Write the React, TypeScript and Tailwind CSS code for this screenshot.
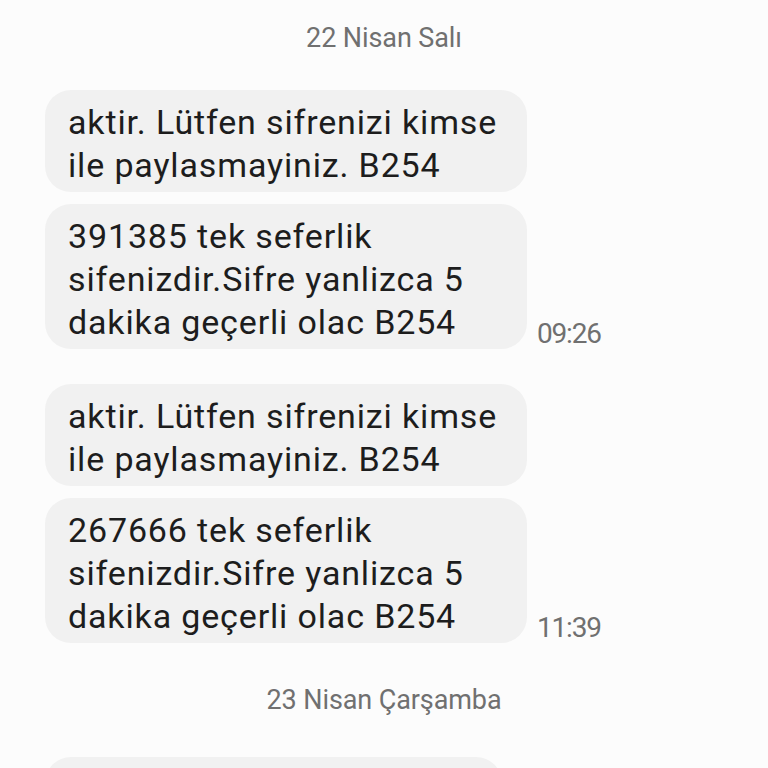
import React from "react";

const font = { fontFamily: "Roboto, 'Noto Sans', sans-serif" };

function Bubble({ lines, time }: { lines: string[]; time?: string }) {
  return (
    <div className="flex items-end">
      <div className="w-[482px] rounded-[26px] bg-[#f1f1f1] pl-[23px] pr-[20px] pt-[11px] pb-[5px] text-[34px] leading-[43px] text-[#1d1d1d] tracking-[0.85px]">
        {lines.map((l, i) => (
          <div key={i} className="whitespace-nowrap">{l}</div>
        ))}
      </div>
      {time && <div className="ml-[10px] -mb-[1px] text-[28px] leading-[32px] text-[#707070] tracking-[-1.2px]">{time}</div>}
    </div>
  );
}

export default function App() {
  return (
    <div className="w-[768px] h-[768px] overflow-hidden bg-[#fcfcfc]" style={font}>
      <div className="pl-[45px]">
        <div className="h-[76px] flex items-center justify-center -ml-[45px] text-[27px] text-[#707070] tracking-[-0.1px]">22 Nisan Salı</div>
        <div className="mt-[14px] flex flex-col gap-[12px]">
          <Bubble lines={["aktir. Lütfen sifrenizi kimse", "ile paylasmayiniz. B254"]} />
          <Bubble lines={["391385 tek seferlik", "sifenizdir.Sifre yanlizca 5", "dakika geçerli olac B254"]} time="09:26" />
        </div>
        <div className="mt-[35px] flex flex-col gap-[12px]">
          <Bubble lines={["aktir. Lütfen sifrenizi kimse", "ile paylasmayiniz. B254"]} />
          <Bubble lines={["267666 tek seferlik", "sifenizdir.Sifre yanlizca 5", "dakika geçerli olac B254"]} time="11:39" />
        </div>
        <div className="h-[114px] flex items-center justify-center -ml-[45px] text-[27px] text-[#707070] tracking-[-0.1px]">23 Nisan Çarşamba</div>
        <div className="w-[457px] h-[100px] rounded-[26px] bg-[#f1f1f1]" />
      </div>
    </div>
  );
}
